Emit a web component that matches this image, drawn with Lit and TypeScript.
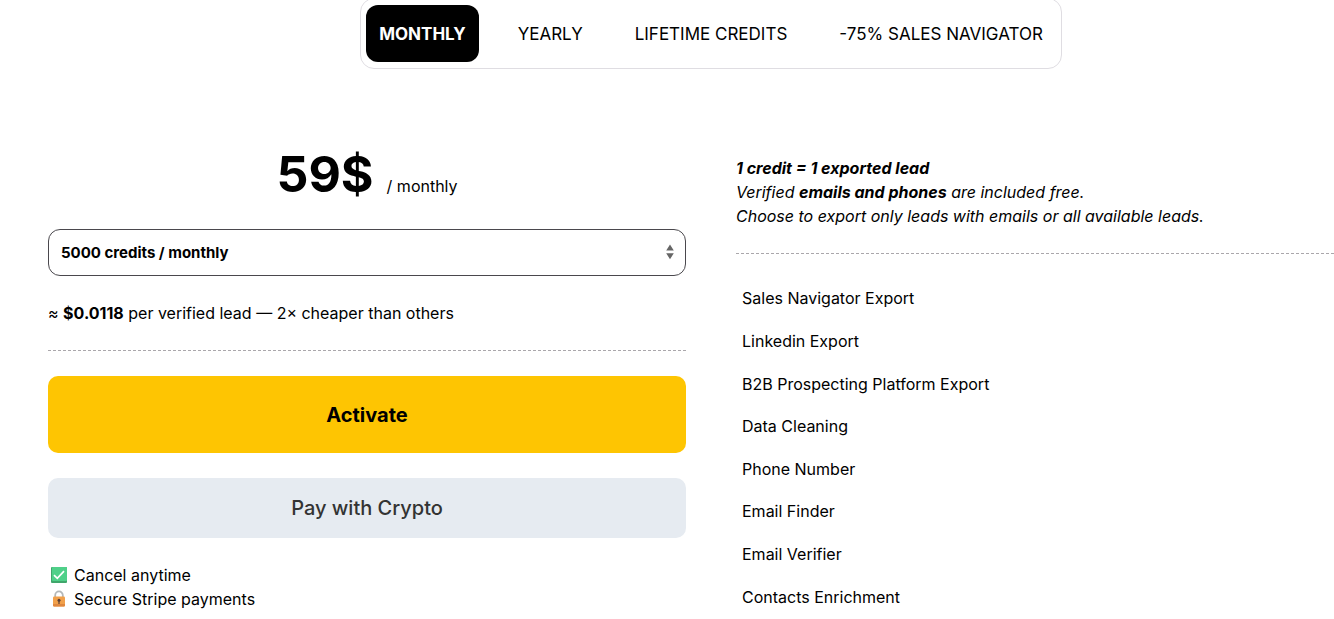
import { LitElement, html, css } from "lit";
import { customElement, state } from "lit/decorators.js";
import { classMap } from "lit/directives/class-map.js";

const TABS = ["MONTHLY", "YEARLY", "LIFETIME CREDITS", "-75% SALES NAVIGATOR"];

const FEATURES = [
  "Sales Navigator Export",
  "Linkedin Export",
  "B2B Prospecting Platform Export",
  "Data Cleaning",
  "Phone Number",
  "Email Finder",
  "Email Verifier",
  "Contacts Enrichment",
];

@customElement("app-root")
export class AppRoot extends LitElement {
  @state() private active = 0;

  static styles = css`
    :host {
      display: block;
      overflow: hidden;
      background: #fff;
      color: #000;
      font: 16px/24px Inter, sans-serif;
    }
    * {
      box-sizing: border-box;
    }
    button,
    select {
      font-family: inherit;
      color: inherit;
      cursor: pointer;
    }
    /* The pricing section bleeds past the right edge of the window. */
    .pricing {
      margin: -2px -40px 0 48px;
    }
    .tabs {
      display: flex;
      gap: 26px;
      width: fit-content;
      margin: 0 auto 74px;
      padding: 6px 5px;
      border: 1px solid #dfdde2;
      border-radius: 14px;
    }
    .tab {
      padding: 17px 13px 15px;
      border: 0;
      border-radius: 12px;
      background: none;
      font-size: 17px;
      line-height: 25px;
      white-space: nowrap;
    }
    .tab.active {
      background: #000;
      color: #fff;
      font-weight: 700;
    }
    .columns {
      display: grid;
      grid-template-columns: 1fr 1fr;
      gap: 50px;
    }
    .price {
      display: flex;
      justify-content: center;
      align-items: baseline;
      gap: 13px;
      margin-bottom: 24px;
    }
    .amount {
      font-size: 50px;
      line-height: 62px;
      font-weight: 700;
    }
    .picker {
      position: relative;
    }
    .select {
      display: block;
      width: 100%;
      height: 47px;
      padding: 0 40px 0 12px;
      border: 1px solid #4a484d;
      border-radius: 12px;
      appearance: none;
      background: #fff;
      font-size: 15px;
      font-weight: 700;
    }
    .arrows {
      position: absolute;
      right: 12px;
      top: 15px;
      pointer-events: none;
    }
    .rate,
    .note {
      margin: 0;
      padding-bottom: 25px;
      border-bottom: 1px dashed #aaa7ab;
    }
    .rate {
      margin: 25px 0;
    }
    .note {
      padding-top: 13px;
      font-style: italic;
    }
    .action {
      display: block;
      width: 100%;
      margin-bottom: 25px;
      border: 0;
      border-radius: 10px;
      font-size: 20px;
      line-height: 25px;
    }
    .primary {
      padding: 27px 25px 25px;
      background: #fec502;
      font-weight: 700;
    }
    .crypto {
      padding: 18px 17px 17px;
      background: #e6ebf1;
      color: #333;
      font-weight: 500;
    }
    .perks,
    .features {
      list-style: none;
      margin: 0;
      padding: 0;
    }
    .perk {
      display: flex;
      align-items: center;
      gap: 6px;
      padding-left: 2px;
    }
    .features {
      display: grid;
      grid-auto-rows: 1fr;
      align-items: center;
      min-height: 341px;
      margin-top: 23px;
      padding-left: 6px;
    }
  `;

  render() {
    return html`
      <main class="pricing">
        <nav class="tabs" aria-label="Billing period">
          ${TABS.map(
            (label, i) => html`<button
              type="button"
              class=${classMap({ tab: true, active: i === this.active })}
              aria-pressed=${i === this.active}
              @click=${() => (this.active = i)}
            >${label}</button>`
          )}
        </nav>
        <div class="columns">
          <section>
            <div class="price"><span class="amount">59$</span><span>/ monthly</span></div>
            <div class="picker">
              <select class="select" aria-label="Credits">
                <option>5000 credits / monthly</option>
              </select>
              <svg class="arrows" width="8" height="16" viewBox="0 0 8 16" aria-hidden="true">
                <path d="M4 0.5 7.8 6.6H0.2zM4 15.3 0.2 9.2H7.8z" fill="#666" />
              </svg>
            </div>
            <p class="rate">≈ <b>$0.0118</b> per verified lead — 2× cheaper than others</p>
            <button type="button" class="action primary">Activate</button>
            <button type="button" class="action crypto">Pay with Crypto</button>
            <ul class="perks">
              <li class="perk">
                <svg width="18" height="18" viewBox="0 0 18 18" aria-hidden="true">
                  <rect x="1" y="1" width="16" height="16" rx="1" fill="#3fa66b" />
                  <rect x="2" y="1" width="15" height="14" rx="1" fill="#4fd089" />
                  <path d="M4 9.2 7.3 12.3 14 5.2" fill="none" stroke="#fff" stroke-width="1.7" />
                </svg>
                <span>Cancel anytime</span>
              </li>
              <li class="perk">
                <svg width="18" height="18" viewBox="0 0 18 18" aria-hidden="true">
                  <path d="M5.2 8V5.2a3.8 3.8 0 0 1 7.6 0V8" fill="none" stroke="#b4b8b9" stroke-width="1.8" />
                  <rect x="3" y="6.5" width="12" height="10" rx="1.2" fill="#f1a04a" />
                  <path d="M3 14h12v1.3a1.2 1.2 0 0 1-1.2 1.2H4.2A1.2 1.2 0 0 1 3 15.3z" fill="#df873f" />
                  <circle cx="9" cy="10.2" r="1.5" fill="#5b3f35" />
                  <path d="M8.4 10.5h1.2v3.6H8.4z" fill="#5b3f35" />
                </svg>
                <span>Secure Stripe payments</span>
              </li>
            </ul>
          </section>
          <section>
            <p class="note">
              <b>1 credit = 1 exported lead</b><br />
              Verified <b>emails and phones</b> are included free.<br />
              Choose to export only leads with emails or all available leads.
            </p>
            <ul class="features">
              ${FEATURES.map((name) => html`<li>${name}</li>`)}
            </ul>
          </section>
        </div>
      </main>
    `;
  }
}
